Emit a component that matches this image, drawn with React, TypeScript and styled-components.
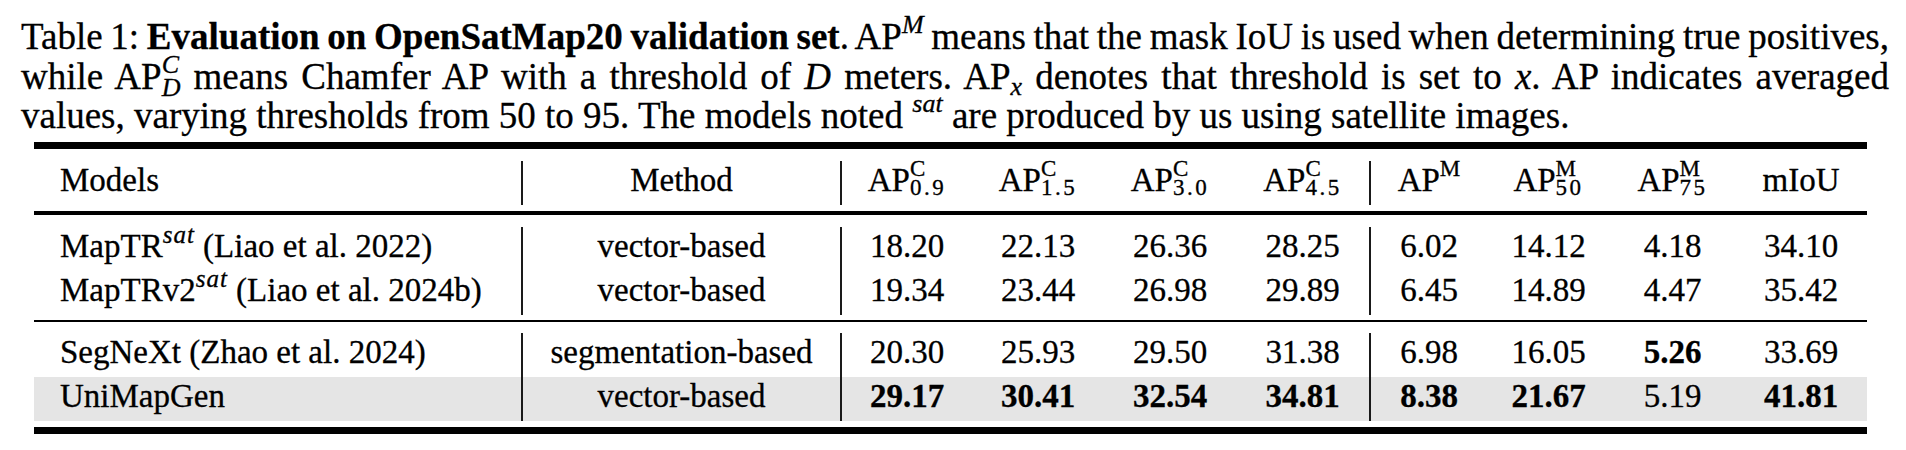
import * as React from "react";
import styled, { createGlobalStyle } from "styled-components";

const GlobalStyle = createGlobalStyle`
	html, body {
		margin: 0;
		padding: 0;
		background: #fff;
	}
	body {
		font-family: "Liberation Serif", "Times New Roman", serif;
		color: #000;
		-webkit-text-stroke: 0.3px #000;
	}
`;

const Page = styled.div`
	width: 1906px;
	padding-top: 17px;
`;

const Caption = styled.div`
	margin-left: 21px;
	width: 1868px;
	font-size: 37px;
`;

const CaptionLine = styled.div<{ $justify?: boolean; $tight?: boolean }>`
	height: 39.5px;
	line-height: 39.5px;
	text-align: ${(p) => (p.$justify ? "justify" : "left")};
	text-align-last: ${(p) => (p.$justify ? "justify" : "left")};
	word-spacing: ${(p) => (p.$tight ? "-3px" : "normal")};
`;

const Strong = styled.b`
	font-weight: 700;
`;

const Var = styled.i`
	font-style: italic;
`;

// single raised / lowered script, zero line-height so rows keep their height
const Script = styled.span<{ $shift: number; $size: number; $italic?: boolean; $track?: number }>`
	font-size: ${(p) => p.$size}px;
	line-height: 0;
	vertical-align: ${(p) => p.$shift}px;
	font-style: ${(p) => (p.$italic ? "italic" : "normal")};
	letter-spacing: ${(p) => p.$track ?? 0}px;
`;

// sup over sub, like AP^C_{0.9}
const Stack = styled.span<{ $shift: number; $size: number; $gap: number; $italic?: boolean }>`
	display: inline-flex;
	flex-direction: column;
	align-items: flex-start;
	font-size: ${(p) => p.$size}px;
	line-height: 0;
	vertical-align: ${(p) => p.$shift}px;
	font-style: ${(p) => (p.$italic ? "italic" : "normal")};

	& > span + span {
		margin-top: ${(p) => p.$gap}px;
	}
`;

const StackPart = styled.span<{ $track?: number }>`
	display: block;
	line-height: 0;
	letter-spacing: ${(p) => p.$track ?? 0}px;
`;

const Table = styled.div`
	margin: 6.5px 0 0 34px;
	width: 1833px;
	font-size: 33px;
`;

const Rule = styled.div<{ $weight: number }>`
	height: ${(p) => p.$weight}px;
	background: #000;
`;

const Section = styled.div<{ $top: number; $bottom: number }>`
	padding: ${(p) => p.$top}px 0 ${(p) => p.$bottom}px;
`;

const Row = styled.div<{ $shaded?: boolean }>`
	display: grid;
	grid-template-columns: 487px 319px 132px 132px 132px 133px 118px 123px 125px 132px;
	height: 44px;
	line-height: 38.5px;
	background: ${(p) => (p.$shaded ? "#e5e5e5" : "transparent")};
`;

const Cell = styled.div<{ $left?: boolean; $divider?: boolean; $bold?: boolean }>`
	box-sizing: border-box;
	padding-left: ${(p) => (p.$left ? "26px" : "0")};
	text-align: ${(p) => (p.$left ? "left" : "center")};
	border-left: ${(p) => (p.$divider ? "2px solid #1a1a1a" : "none")};
	font-weight: ${(p) => (p.$bold ? 700 : 400)};
	white-space: nowrap;
`;

const DIVIDERS = [1, 2, 6];

function Ap({ sup, sub }: { sup: string; sub?: string }) {
	if (!sub) {
		return (
			<>
				AP
				<Script $shift={15} $size={23}>
					{sup}
				</Script>
			</>
		);
	}
	return (
		<>
			AP
			<Stack $shift={15} $size={23} $gap={19}>
				<StackPart>{sup}</StackPart>
				<StackPart $track={2.5}>{sub}</StackPart>
			</Stack>
		</>
	);
}

const header: React.ReactNode[] = [
	"Models",
	"Method",
	<Ap sup="C" sub="0.9" />,
	<Ap sup="C" sub="1.5" />,
	<Ap sup="C" sub="3.0" />,
	<Ap sup="C" sub="4.5" />,
	<Ap sup="M" />,
	<Ap sup="M" sub="50" />,
	<Ap sup="M" sub="75" />,
	"mIoU",
];

interface IResult {
	model: React.ReactNode;
	method: string;
	values: string[];
	bold: number[];
}

const sat = (
	<Script $shift={14} $size={25} $italic $track={1}>
		sat
	</Script>
);

const groups: IResult[][] = [
	[
		{
			model: <>MapTR{sat} (Liao et al. 2022)</>,
			method: "vector-based",
			values: ["18.20", "22.13", "26.36", "28.25", "6.02", "14.12", "4.18", "34.10"],
			bold: [],
		},
		{
			model: <>MapTRv2{sat} (Liao et al. 2024b)</>,
			method: "vector-based",
			values: ["19.34", "23.44", "26.98", "29.89", "6.45", "14.89", "4.47", "35.42"],
			bold: [],
		},
	],
	[
		{
			model: "SegNeXt (Zhao et al. 2024)",
			method: "segmentation-based",
			values: ["20.30", "25.93", "29.50", "31.38", "6.98", "16.05", "5.26", "33.69"],
			bold: [6],
		},
		{
			model: "UniMapGen",
			method: "vector-based",
			values: ["29.17", "30.41", "32.54", "34.81", "8.38", "21.67", "5.19", "41.81"],
			bold: [0, 1, 2, 3, 4, 5, 7],
		},
	],
];

function ResultRow({ row, shaded }: { row: IResult; shaded?: boolean }) {
	return (
		<Row $shaded={shaded}>
			<Cell $left>{row.model}</Cell>
			<Cell $divider>{row.method}</Cell>
			{row.values.map((v, i) => (
				<Cell key={i} $divider={DIVIDERS.includes(i + 2)} $bold={row.bold.includes(i)}>
					{v}
				</Cell>
			))}
		</Row>
	);
}

export default function App() {
	return (
		<Page>
			<GlobalStyle />
			<Caption>
				<CaptionLine $justify $tight>
					Table 1: <Strong>Evaluation on OpenSatMap20 validation set</Strong>. AP
					<Script $shift={16} $size={26} $italic>
						M
					</Script>{" "}
					means that the mask IoU is used when determining true positives,
				</CaptionLine>
				<CaptionLine $justify>
					while AP
					<Stack $shift={16} $size={26} $gap={23} $italic>
						<StackPart>C</StackPart>
						<StackPart>D</StackPart>
					</Stack>{" "}
					means Chamfer AP with a threshold of <Var>D</Var> meters. AP
					<Script $shift={-6} $size={26} $italic>
						x
					</Script>{" "}
					denotes that threshold is set to <Var>x</Var>. AP indicates averaged
				</CaptionLine>
				<CaptionLine>
					values, varying thresholds from 50 to 95. The models noted{" "}
					<Script $shift={16} $size={26} $italic>
						sat
					</Script>{" "}
					are produced by us using satellite images.
				</CaptionLine>
			</Caption>
			<Table>
				<Rule $weight={7} />
				<Section $top={12} $bottom={6}>
					<Row>
						{header.map((h, i) => (
							<Cell key={i} $left={i === 0} $divider={DIVIDERS.includes(i)}>
								{h}
							</Cell>
						))}
					</Row>
				</Section>
				<Rule $weight={3.5} />
				<Section $top={12.5} $bottom={5}>
					{groups[0].map((r, i) => (
						<ResultRow key={i} row={r} />
					))}
				</Section>
				<Rule $weight={2} />
				<Section $top={11} $bottom={6}>
					{groups[1].map((r, i) => (
						<ResultRow key={i} row={r} shaded={i === 1} />
					))}
				</Section>
				<Rule $weight={7} />
			</Table>
		</Page>
	);
}
